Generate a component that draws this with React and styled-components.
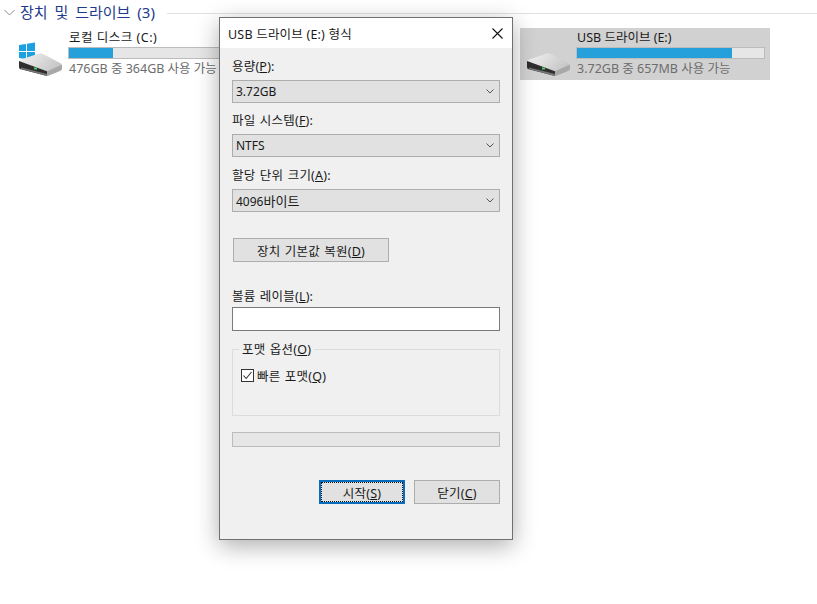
import React from "react";
import styled, { createGlobalStyle } from "styled-components";

const FONT = `"Noto Sans", "Noto Sans CJK KR", sans-serif`;

const Global = createGlobalStyle`
  html, body { margin: 0; padding: 0; background: #fff; }
  body { font-family: ${FONT}; overflow: hidden; }
`;

const Page = styled.div`
  position: relative;
  width: 817px;
  height: 604px;
  overflow: hidden;
  background: #fff;
`;

const GroupHeader = styled.div`
  display: flex;
  align-items: center;
  height: 24px;
  padding-left: 4px;
  gap: 5px;
  color: #1e3a8a;
  font-size: 15px;
  line-height: 22px;
  word-spacing: 3px;
  white-space: nowrap;
`;

const HeaderRule = styled.div`
  flex: 1;
  height: 1px;
  background: #e2e2e2;
  margin-left: 7px;
  margin-top: 3px;
`;

const Tiles = styled.div`
  display: flex;
  padding: 4px 0 0 12px;
  gap: 258px;
`;

const Tile = styled.div`
  display: flex;
  width: 250px;
  height: 52px;
  box-sizing: border-box;
  padding-right: 5px;
  background: ${(p) => (p.$selected ? "#d1d1d1" : "transparent")};
`;

const TileIcon = styled.div`
  width: 56px;
  flex: none;
  display: flex;
  align-items: flex-end;
`;

const TileBody = styled.div`
  flex: 1;
  display: flex;
  flex-direction: column;
  min-width: 0;
`;

const TileName = styled.div`
  height: 19px;
  line-height: 19px;
  padding-left: 1px;
  font-size: 12.5px;
  letter-spacing: ${(p) => p.$ls || 0}px;
  color: #1a1a1a;
  white-space: nowrap;
`;

const Bar = styled.div`
  height: 12px;
  box-sizing: border-box;
  border: 1px solid #bcbcbc;
  background: #e6e6e6;
`;

const BarFill = styled.div`
  height: 100%;
  background: #26a0da;
`;

const TileInfo = styled.div`
  height: 20px;
  line-height: 19px;
  padding-left: 1px;
  font-size: 12.5px;
  color: #6d6d6d;
  white-space: nowrap;
`;

const Dialog = styled.div`
  position: absolute;
  left: 219px;
  top: 17px;
  width: 294px;
  height: 523px;
  box-sizing: border-box;
  border: 1px solid #707070;
  background: #f0f0f0;
  box-shadow: 0 6px 22px rgba(0, 0, 0, 0.32);
  display: flex;
  flex-direction: column;
  font-size: 12.5px;
  letter-spacing: 0.2px;
  word-spacing: 1px;
  color: #1a1a1a;
`;

const TitleBar = styled.div`
  height: 30px;
  flex: none;
  background: #fff;
  display: flex;
  align-items: center;
  justify-content: space-between;
  padding: 0 9px 0 8px;
  word-spacing: 0;
`;

const DialogBody = styled.div`
  flex: 1;
  display: flex;
  flex-direction: column;
  padding: 0 12px;
`;

const Label = styled.div`
  height: 17px;
  line-height: 17px;
  margin-top: ${(p) => p.$top}px;
  margin-bottom: ${(p) => p.$bottom}px;
  white-space: nowrap;
`;

const Select = styled.div`
  height: 23px;
  box-sizing: border-box;
  border: 1px solid #adadad;
  background: #e1e1e1;
  display: flex;
  align-items: center;
  justify-content: space-between;
  padding: 0 5px 0 3px;
  font-size: 12px;
  letter-spacing: 0;
`;

const Hangul = styled.span`
  font-size: 13px;
`;

const FullButton = styled.div`
  box-sizing: border-box;
  width: ${(p) => p.$w}px;
  height: 24px;
  border: 1px solid #adadad;
  background: #e1e1e1;
  display: flex;
  align-items: center;
  justify-content: center;
  white-space: pre;
`;

const ResetButton = styled(FullButton)`
  margin: 26px 0 0 1px;
`;

const TextInput = styled.div`
  height: 24px;
  box-sizing: border-box;
  border: 1px solid #7a7a7a;
  background: #fff;
`;

const Fieldset = styled.div`
  position: relative;
  margin-top: 18px;
  height: 67px;
  box-sizing: border-box;
  border: 1px solid #dcdcdc;
  padding: 17px 0 0 8px;
`;

const Legend = styled.div`
  position: absolute;
  left: 6px;
  top: -8px;
  height: 16px;
  line-height: 16px;
  padding: 0 3px;
  background: #f0f0f0;
`;

const CheckRow = styled.div`
  display: flex;
  align-items: center;
  gap: 3px;
  height: 17px;
`;

const CheckBox = styled.div`
  width: 13px;
  height: 13px;
  box-sizing: border-box;
  border: 1px solid #333;
  background: #fff;
  display: flex;
  align-items: center;
  justify-content: center;
`;

const Progress = styled.div`
  margin-top: 16px;
  height: 15px;
  box-sizing: border-box;
  border: 1px solid #bcbcbc;
  background: #e6e6e6;
`;

const Footer = styled.div`
  margin-top: 33px;
  display: flex;
  justify-content: flex-end;
  gap: 9px;
`;

const DefaultButton = styled(FullButton)`
  border: 2px solid #0a6cbd;
  outline: 1px dotted #111;
  outline-offset: -3px;
`;

const Key = styled.span`
  text-decoration: underline;
  text-underline-offset: 1px;
`;

const Chevron = () => (
  <svg width="8" height="5" viewBox="0 0 8 5" fill="none" stroke="#555" strokeWidth="1">
    <path d="M0.5 0.5 L4 4 L7.5 0.5" />
  </svg>
);

const Drive = ({ windows }) => {
  const id = windows ? "topA" : "topB";
  return (
    <svg width="56" height="42" viewBox="0 0 56 42">
      <defs>
        <linearGradient id={id} x1="0" y1="0" x2="1" y2="0.4">
          <stop offset="0" stopColor="#f4f4f4" />
          <stop offset="1" stopColor="#c8c8c8" />
        </linearGradient>
      </defs>
      {windows && (
        <g fill="#1ba1e2">
          <path d="M7 7 L14 6 V13 H7 Z" />
          <path d="M15 5.8 L23 4.6 V13 H15 Z" />
          <path d="M7 14 H14 V21 L7 20 Z" />
          <path d="M15 14 H23 V22.4 L15 21.2 Z" />
        </g>
      )}
      <path d="M7 23 Q7 22 9 21.4 L27 15.4 Q29 15 31 16 L49 25.5 Q50.5 26.5 49 27.2 L36 33 Q35 33.4 34 33 Z" fill={`url(#${id})`} />
      <path d="M7 23 L35 33.2 V38 L8 31 Q7 30.6 7 29 Z" fill="#2e2e2e" />
      <path d="M9 29.5 L35 36 V38 L9 31 Z" fill="#777" />
      <path d="M35 33.2 L50 26.5 V31 Q50 32 48 33 L37 37.6 Q36 38 35 38 Z" fill="#a8a8a8" />
      <rect x="22" y="29.5" width="3" height="2" fill="#46d060" />
    </svg>
  );
};

export default function App() {
  return (
    <Page>
      <Global />
      <GroupHeader>
        <svg width="11" height="7" viewBox="0 0 11 7" fill="none" stroke="#8a8a8a" strokeWidth="1">
          <path d="M0.5 1 L5.5 6 L10.5 1" />
        </svg>
        <span>장치 및 드라이브 (3)</span>
        <HeaderRule />
      </GroupHeader>
      <Tiles>
        <Tile>
          <TileIcon><Drive windows /></TileIcon>
          <TileBody>
            <TileName $ls={0.5}>로컬 디스크 (C:)</TileName>
            <Bar><BarFill style={{ width: "23.5%" }} /></Bar>
            <TileInfo>476GB 중 364GB 사용 가능</TileInfo>
          </TileBody>
        </Tile>
        <Tile $selected>
          <TileIcon><Drive /></TileIcon>
          <TileBody>
            <TileName>USB 드라이브 (E:)</TileName>
            <Bar><BarFill style={{ width: "83%" }} /></Bar>
            <TileInfo>3.72GB 중 657MB 사용 가능</TileInfo>
          </TileBody>
        </Tile>
      </Tiles>

      <Dialog>
        <TitleBar>
          <span>USB 드라이브 (E:) 형식</span>
          <svg width="11" height="11" viewBox="0 0 11 11" fill="none" stroke="#111" strokeWidth="1.1">
            <path d="M0.5 0.5 L10.5 10.5 M10.5 0.5 L0.5 10.5" />
          </svg>
        </TitleBar>
        <DialogBody>
          <Label $top={10} $bottom={5}>용량(<Key>P</Key>):</Label>
          <Select>3.72GB<Chevron /></Select>
          <Label $top={9} $bottom={5}>파일 시스템(<Key>F</Key>):</Label>
          <Select>NTFS<Chevron /></Select>
          <Label $top={10} $bottom={5}>할당 단위 크기(<Key>A</Key>):</Label>
          <Select><span>4096<Hangul>바이트</Hangul></span><Chevron /></Select>
          <ResetButton $w={156}><span>장치 기본값 복원(<Key>D</Key>)</span></ResetButton>
          <Label $top={26} $bottom={2}>볼륨 레이블(<Key>L</Key>):</Label>
          <TextInput />
          <Fieldset>
            <Legend>포맷 옵션(<Key>O</Key>)</Legend>
            <CheckRow>
              <CheckBox>
                <svg width="11" height="11" viewBox="0 0 11 11" fill="none" stroke="#333" strokeWidth="1.1">
                  <path d="M1.5 5.5 L4.2 8.5 L9.5 2" />
                </svg>
              </CheckBox>
              <span>빠른 포맷(<Key>Q</Key>)</span>
            </CheckRow>
          </Fieldset>
          <Progress />
          <Footer>
            <DefaultButton $w={86}><span>시작(<Key>S</Key>)</span></DefaultButton>
            <FullButton $w={86}><span>닫기(<Key>C</Key>)</span></FullButton>
          </Footer>
        </DialogBody>
      </Dialog>
    </Page>
  );
}
